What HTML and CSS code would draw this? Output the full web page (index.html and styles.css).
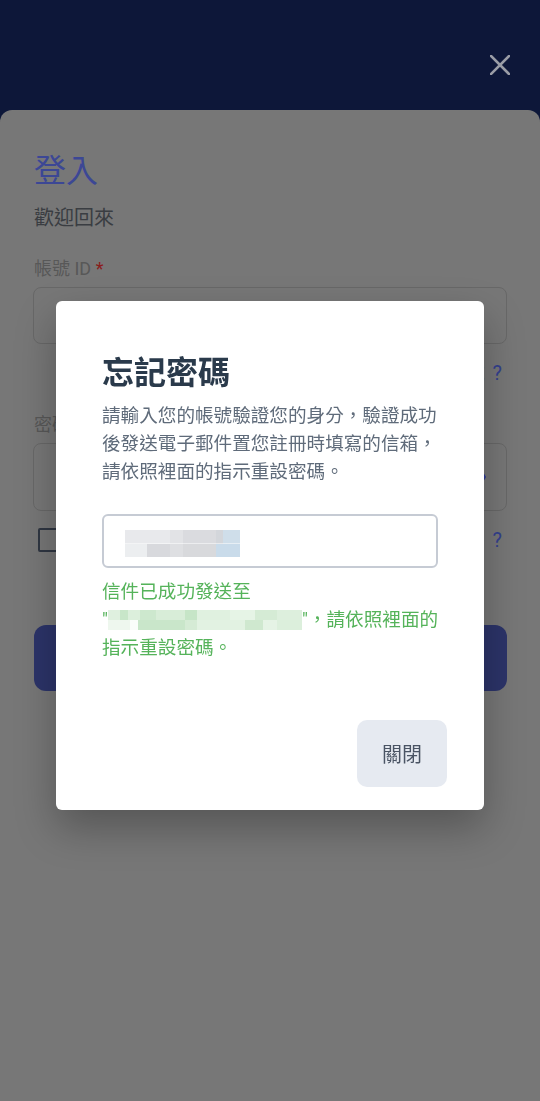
FILE: index.html
```html
<!DOCTYPE html>
<html lang="zh-Hant">
<head>
<meta charset="utf-8">
<title>登入</title>
<link rel="stylesheet" href="styles.css">
</head>
<body>
<div class="screen">
  <header class="topbar">
    <svg class="close-x" width="20" height="20" viewBox="0 0 20 20" aria-hidden="true">
      <path d="M1 1 L19 19 M19 1 L1 19" stroke="currentColor" stroke-width="2.6" stroke-linecap="square" fill="none"/>
    </svg>
  </header>
  <main class="card">
    <h1 class="login-title">登入</h1>
    <p class="welcome">歡迎回來</p>
    <label class="field-label">帳號 ID <span class="req">*</span></label>
    <div class="field field-id"></div>
    <div class="link-row"><a class="link">忘記帳號<span class="q">?</span></a></div>
    <label class="field-label label-pw">密碼 <span class="req">*</span></label>
    <div class="field field-pw">
      <svg class="eye" width="24" height="24" viewBox="0 0 24 24" aria-hidden="true">
        <path d="M12 4.5C7 4.5 2.73 7.61 1 12c1.73 4.39 6 7.5 11 7.5s9.27-3.11 11-7.5c-1.73-4.39-6-7.5-11-7.5zM12 17a5 5 0 1 1 0-10 5 5 0 0 1 0 10zm0-8a3 3 0 1 0 0 6 3 3 0 0 0 0-6z" fill="currentColor"/>
      </svg>
    </div>
    <div class="check-row">
      <span class="checkbox"></span>
      <span class="remember">記住我</span>
      <a class="link">忘記密碼<span class="q">?</span></a>
    </div>
    <button class="login-btn">登入</button>
  </main>
</div>

<div class="backdrop">
  <section class="modal" role="dialog">
    <h2 class="modal-title">忘記密碼</h2>
    <p class="modal-desc">請輸入您的帳號驗證您的身分，驗證成功後發送電子郵件置您註冊時填寫的信箱，請依照裡面的指示重設密碼。</p>
    <div class="modal-input"><span class="blur-input"></span></div>
    <p class="success">信件已成功發送至<br>"<span class="blur-mail"></span>"，請依照裡面的<br>指示重設密碼。</p>
    <div class="modal-footer">
      <button class="close-btn">關閉</button>
    </div>
  </section>
</div>
</body>
</html>
```

FILE: styles.css
```css
* { box-sizing: border-box; }

html, body {
  margin: 0;
  padding: 0;
}

body {
  background: #777777;
  font-family: Roboto, "Noto Sans CJK TC", "Noto Sans", sans-serif;
  width: 540px;
  height: 1101px;
  overflow: hidden;
}

.screen {
  background: #0d1739;
  height: 1101px;
  display: flex;
  flex-direction: column;
}

.topbar {
  height: 110px;
  flex: none;
  display: flex;
  justify-content: flex-end;
  align-items: flex-start;
  padding: 55px 30px 0 0;
}

.close-x {
  color: #9a9da6;
  display: block;
}

.card {
  flex: 1;
  background: #777777;
  border-radius: 12px 12px 0 0;
  padding: 39px 33px 0 33px;
  display: flex;
  flex-direction: column;
}

.login-title {
  margin: 0;
  font-size: 32px;
  line-height: 44px;
  font-weight: 400;
  color: #3c4795;
  padding-left: 1px;
}

.welcome {
  margin: 10px 0 0;
  font-size: 20px;
  line-height: 30px;
  color: #3a3d42;
  padding-left: 1px;
}

.field-label {
  display: block;
  margin-top: 22px;
  font-size: 18px;
  line-height: 28px;
  color: #585858;
  padding-left: 1px;
}

.req { color: #8a1c1c; }

.field {
  border: 1px solid #686868;
  border-radius: 8px;
  margin-top: 4px;
}

.field-id { height: 57px; }

.link-row {
  margin-top: 15px;
  display: flex;
  justify-content: flex-end;
  padding-right: 5px;
}

.link {
  font-size: 20px;
  line-height: 28px;
  color: #33408e;
}

.q { padding-left: 8px; }

.label-pw { margin-top: 24px; }

.field-pw {
  height: 68px;
  display: flex;
  align-items: center;
  justify-content: flex-end;
  padding-right: 19px;
}

.eye {
  color: #2c3895;
  display: block;
}

.check-row {
  margin-top: 16px;
  display: flex;
  align-items: center;
  height: 26px;
  padding: 0 5px 0 5px;
  gap: 10px;
}

.checkbox {
  width: 22px;
  height: 24px;
  border: 2.5px solid #2f3642;
  border-radius: 2px;
}

.remember {
  font-size: 18px;
  color: #3a3d42;
  flex: 1;
}

.login-btn {
  margin-top: 72px;
  height: 66px;
  width: 473px;
  margin-left: 1px;
  border: none;
  border-radius: 12px;
  background: #2c3469;
  color: #777;
  font-family: inherit;
  font-size: 20px;
}

/* modal */
.backdrop {
  position: fixed;
  inset: 0;
  display: flex;
  align-items: center;
  justify-content: center;
  padding-top: 10px;
}

.modal {
  width: 428px;
  background: #ffffff;
  border-radius: 6px;
  padding: 52px 46px 23px 46px;
  box-shadow: 0 18px 40px rgba(0, 0, 0, 0.28);
}

.modal-title {
  margin: 0;
  font-size: 32px;
  line-height: 40px;
  font-weight: 700;
  color: #2a3a4b;
}

.modal-desc {
  margin: 9px 0 0;
  font-size: 18.6px;
  line-height: 28px;
  color: #5f6b7a;
}

.modal-input {
  margin-top: 28px;
  height: 54px;
  border: 2px solid #c6cbd4;
  border-radius: 6px;
  display: flex;
  align-items: center;
  padding: 5px 0 0 21px;
}

.blur-input {
  display: block;
  width: 115px;
  height: 27px;
  background:
    linear-gradient(to right, #e8e9ec 0 45px, #e2e3e6 45px 58px, #dadbdf 58px 91px, #d3d6db 91px 98px, #cfdeea 98px 115px) top / 100% 50% no-repeat,
    linear-gradient(to right, #eceef0 0 22px, #d8d9dd 22px 45px, #dedfe2 45px 58px, #d8d9dc 58px 91px, #c9dbea 91px 115px) bottom / 100% 50% no-repeat;
}

.success {
  margin: 10px 0 0;
  font-size: 18.6px;
  line-height: 28px;
  color: #55b35a;
  white-space: nowrap;
}

.blur-mail {
  display: inline-block;
  width: 194px;
  height: 20px;
  vertical-align: -4px;
  background:
    linear-gradient(to right, #dff0df 0 12px, #c8e6c9 12px 20px, #dcefdc 20px 32px, #cde8ce 32px 48px, #d8edd8 48px 77px, #c6e5c7 77px 89px, #e0f1e0 89px 122px, #e6f4e6 122px 147px, #d5ebd5 147px 169px, #ddefdd 169px 194px) top / 100% 50% no-repeat,
    linear-gradient(to right, #eef7ee 0 22px, #fafdfa 22px 30px, #c9e6ca 30px 77px, #d5ebd5 77px 89px, #e2f2e2 89px 137px, #cfe8cf 137px 155px, #e5f3e5 155px 169px, #dcefdc 169px 194px) bottom / 100% 50% no-repeat;
}

.modal-footer {
  margin-top: 58px;
  margin-right: -9px;
  display: flex;
  justify-content: flex-end;
}

.close-btn {
  width: 90px;
  height: 67px;
  border: none;
  border-radius: 10px;
  background: #e6eaf1;
  color: #4a5464;
  font-family: inherit;
  font-size: 20px;
  padding: 0;
}
```
